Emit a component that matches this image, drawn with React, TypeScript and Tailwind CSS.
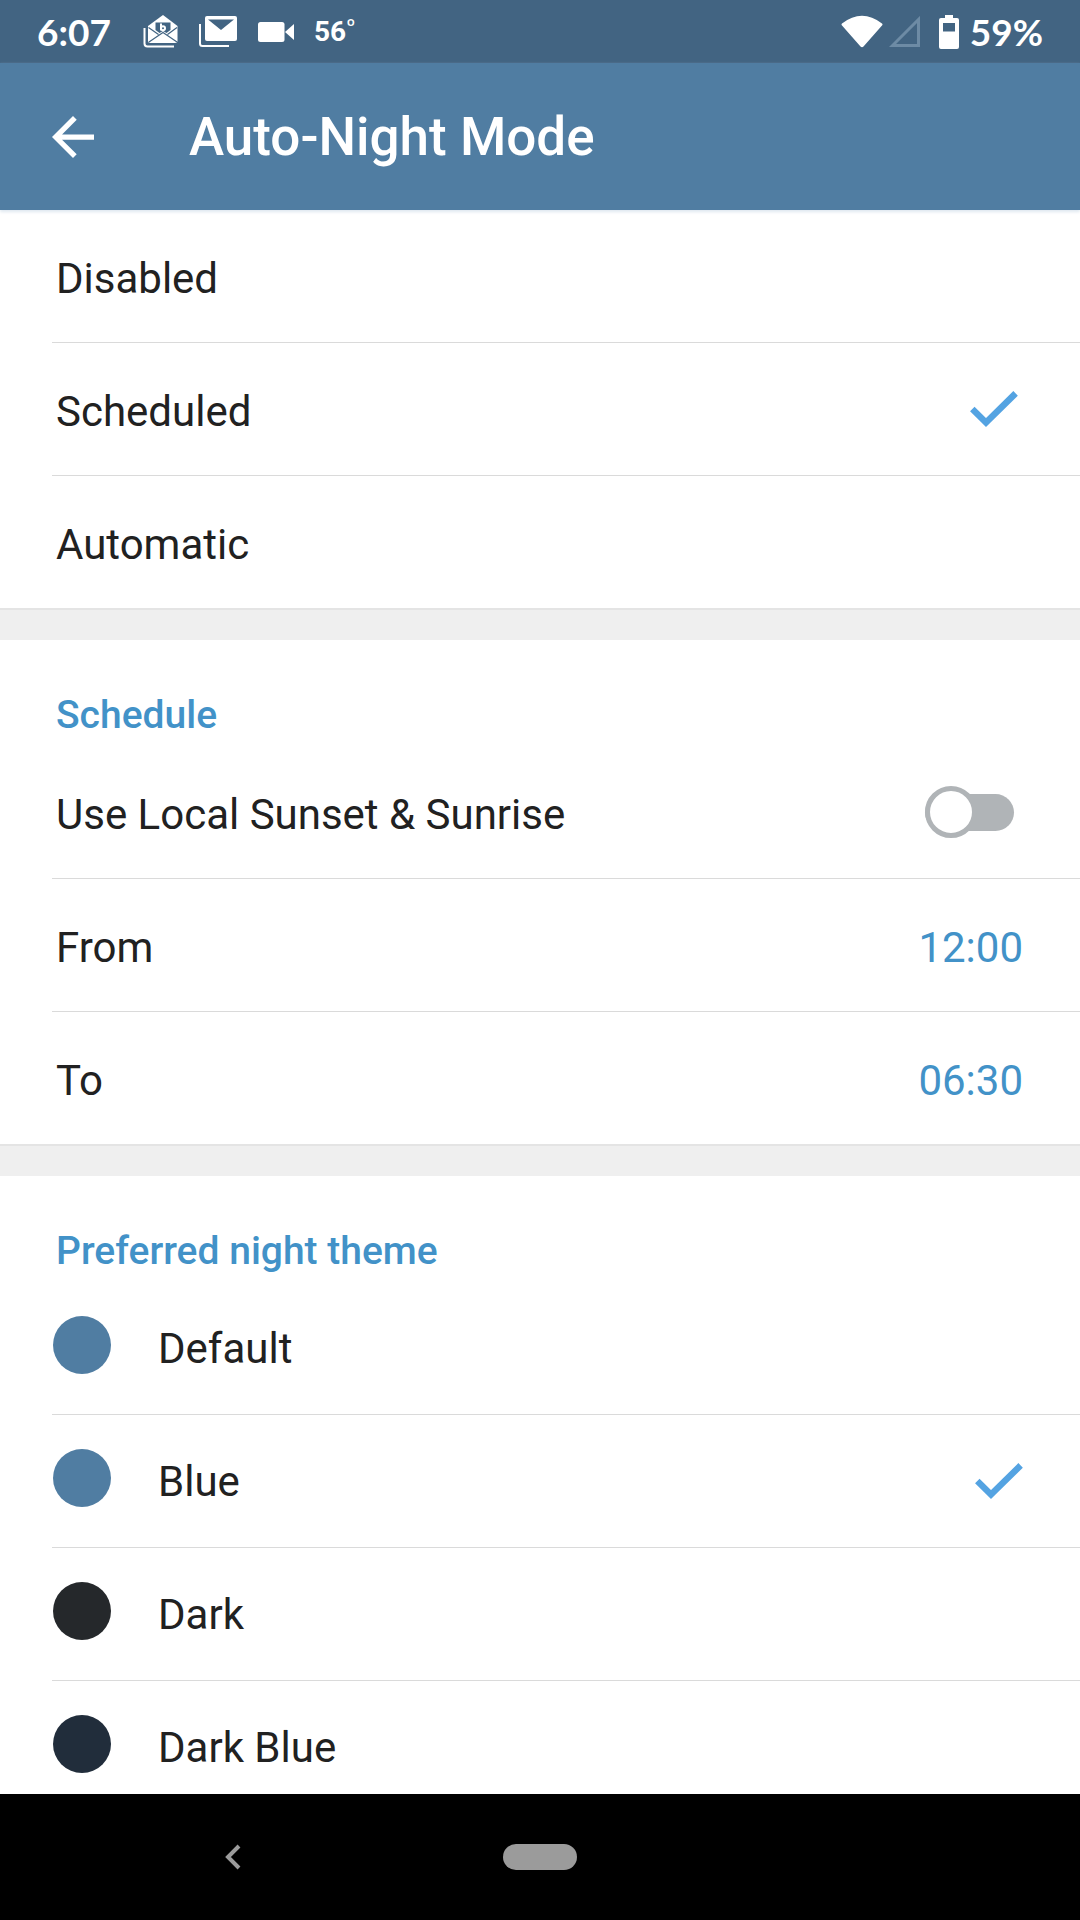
import { useState, type ReactNode } from "react";

type Theme = { name: string; swatch: string };

const modes = ["Disabled", "Scheduled", "Automatic"];

const themes: Theme[] = [
  { name: "Default", swatch: "bg-[#507da2]" },
  { name: "Blue", swatch: "bg-[#507da2]" },
  { name: "Dark", swatch: "bg-[#25282b]" },
  { name: "Dark Blue", swatch: "bg-[#212d3b]" },
];

const times = [
  { label: "From", value: "12:00" },
  { label: "To", value: "06:30" },
];

function CheckIcon() {
  return (
    <svg viewBox="0 0 48 37" className="h-[37px] w-12" aria-hidden="true">
      <path d="M2.300 18L16 31.500L45.600 2.400" fill="none" stroke="#54a3e2" strokeWidth="6.400" />
    </svg>
  );
}

function StatusBar() {
  return (
    <div className="flex h-[63px] shrink-0 items-center justify-between bg-[#426482] px-[37px] text-white">
      <div className="flex items-center">
        <span className="w-[106px] font-[Lato,sans-serif] text-[37px] leading-[44px] font-bold">6:07</span>
        <svg viewBox="0 0 35 33" className="mr-[21px] h-[33px] w-[35px]" aria-hidden="true">
          <path d="M1.500 13V28.500Q1.500 31.500 4.500 31.500H31" fill="none" stroke="#fff" strokeWidth="2" />
          <path d="M20 0L34.500 11V25.500Q34.500 28 32 28H7.500Q5 28 5 25.500V11z" fill="#fff" />
          <path d="M5.500 12.500L15.500 19.500M34 12.500L24.500 19.500M6 27L20 17.500L34 27" fill="none" stroke="#426482" strokeWidth="1.200" />
          <path d="M12.500 7.500H27.500V15L23.500 18L20 16L16.500 18L12.500 15z" fill="#426482" />
          <path d="M18 8.500V15.500M18 13.200a2 2 0 1 1 4 0a2 2 0 1 1 -4 0" fill="none" stroke="#fff" strokeWidth="2" />
        </svg>
        <svg viewBox="0 0 38 31" className="mr-[21px] h-[31px] w-[38px]" aria-hidden="true">
          <path d="M1 8V27.500Q1 30 3.500 30H30" fill="none" stroke="#fff" strokeWidth="2" />
          <rect x="6" width="32" height="25" rx="2" fill="#fff" />
          <path d="M9 3.500H35L22 14z" fill="#426482" />
        </svg>
        <svg viewBox="0 0 36 20" className="mr-5 h-5 w-9" fill="#fff" aria-hidden="true">
          <rect width="26.500" height="20" rx="2.500" />
          <path d="M27 10L36 2V18z" />
        </svg>
        <span className="text-[28px] leading-9 font-bold">56</span>
        <span className="self-start text-[20px] leading-8">º</span>
      </div>
      <div className="flex items-center">
        <svg viewBox="0 0 42 33" className="mr-1.5 h-[33px] w-[42px]" fill="#fff" aria-hidden="true">
          <path d="M1 8.500Q21 -7 41 8.500Q42 9.500 41 10.500L22.500 31.500Q21 33 19.500 31.500L1 10.500Q0 9.500 1 8.500z" />
        </svg>
        <svg viewBox="0 0 32 32" className="mr-[18px] size-8" aria-hidden="true">
          <path d="M29.500 3.500V29.500H3.500z" fill="none" stroke="#6d8ba5" strokeWidth="3" />
        </svg>
        <svg viewBox="0 0 20 34" className="mr-[11px] h-[34px] w-5" aria-hidden="true">
          <path d="M6 0H14V3H18Q20 3 20 5V32Q20 34 18 34H2Q0 34 0 32V5Q0 3 2 3H6z" fill="#fff" />
          <path d="M4 8H16V16.500H4z" fill="#426482" />
        </svg>
        <span className="font-[Lato,sans-serif] text-[37px] leading-[44px] font-bold">59%</span>
      </div>
    </div>
  );
}

function Row({ children, last }: { children: ReactNode; last?: boolean }) {
  return (
    <div className={last ? "ml-[52px] h-[132px]" : "ml-[52px] h-[133px] border-b border-[#dadada]"}>
      {children}
    </div>
  );
}

function SectionTitle({ children }: { children: ReactNode }) {
  return (
    <h2 className="h-[106px] pt-[51px] pl-14 text-[39px] leading-[48px] font-medium text-[#4292c8]">
      {children}
    </h2>
  );
}

function Divider() {
  return <div className="h-8 border-t-2 border-[#e4e4e4] bg-[#efefef]" />;
}

export default function App() {
  const [mode, setMode] = useState("Scheduled");
  const [theme, setTheme] = useState("Blue");
  const [local, setLocal] = useState(false);

  return (
    <div className="flex h-screen flex-col bg-white font-[Roboto,sans-serif] text-[#212121]">
      <StatusBar />

      <header className="relative flex h-[147px] shrink-0 items-center bg-[#507da2] pl-[52px] text-white shadow-[0_2px_3px_#dfe8f0]">
        <button aria-label="Back">
          <svg viewBox="4 4 16 16" className="size-[42px]" fill="currentColor" aria-hidden="true">
            <path d="M20 11H7.830l5.590-5.590L12 4l-8 8 8 8 1.410-1.410L7.830 13H20v-2z" />
          </svg>
        </button>
        <h1 className="pl-[95px] text-[53px] leading-[64px] font-medium">Auto-Night Mode</h1>
      </header>

      <main className="min-h-0 flex-1 overflow-y-auto text-[42px] leading-[52px] [scrollbar-width:none]">
        <section>
          {modes.map((m, i) => (
            <Row key={m} last={i === modes.length - 1}>
              <label className="flex h-full items-center justify-between pr-[62px] pl-1">
                <input type="radio" name="mode" className="sr-only" checked={mode === m} onChange={() => setMode(m)} />
                <span className="pt-1.5">{m}</span>
                {mode === m && <CheckIcon />}
              </label>
            </Row>
          ))}
        </section>

        <Divider />

        <section>
          <SectionTitle>Schedule</SectionTitle>
          <Row>
            <label className="flex h-full items-center justify-between pr-[66px] pl-1">
              <span className="pt-1.5">Use Local Sunset &amp; Sunrise</span>
              <input
                type="checkbox"
                role="switch"
                checked={local}
                onChange={() => setLocal(!local)}
                className="relative h-[52px] w-[89px] appearance-none before:absolute before:inset-x-0 before:top-2 before:h-[37px] before:rounded-full before:bg-[#b0b4b7] after:absolute after:top-0 after:left-0 after:size-[52px] after:rounded-full after:border-5 after:border-[#b0b4b7] after:bg-white checked:before:bg-[#54a5e3] checked:after:right-0 checked:after:left-auto checked:after:border-[#54a5e3]"
              />
            </label>
          </Row>
          {times.map((t, i) => (
            <Row key={t.label} last={i === times.length - 1}>
              <button className="flex h-full w-full items-center justify-between pt-1.5 pr-[57px] pl-1 text-left">
                <span>{t.label}</span>
                <span className="text-[#4292c8]">{t.value}</span>
              </button>
            </Row>
          ))}
        </section>

        <Divider />

        <section>
          <SectionTitle>Preferred night theme</SectionTitle>
          {themes.map((t) => (
            <Row key={t.name}>
              <label className="flex h-full items-center pr-[57px]">
                <input type="radio" name="theme" className="sr-only" checked={theme === t.name} onChange={() => setTheme(t.name)} />
                <span className={`mr-[47px] mb-1.5 ml-px size-[58px] rounded-full ${t.swatch}`} />
                <span className="flex-1 pt-0.5">{t.name}</span>
                {theme === t.name && <CheckIcon />}
              </label>
            </Row>
          ))}
        </section>
      </main>

      <nav className="grid h-[126px] shrink-0 grid-cols-7 items-center bg-black">
        <button aria-label="Back" className="col-start-2 flex justify-center pl-1">
          <svg viewBox="0 0 16 26" className="h-[26px] w-4" aria-hidden="true">
            <path d="M14 2L3 13L14 24" fill="none" stroke="#9b9b9b" strokeWidth="4" />
          </svg>
        </button>
        <button aria-label="Home" className="col-start-4 h-[26px] w-[74px] justify-self-center rounded-full bg-[#9b9b9b]" />
      </nav>
    </div>
  );
}
